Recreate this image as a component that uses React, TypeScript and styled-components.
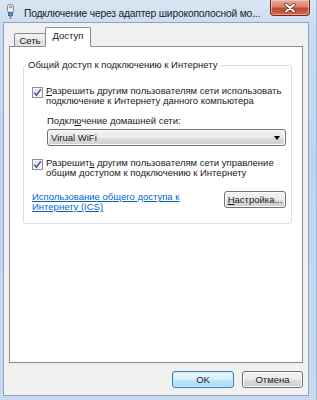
import React from "react";
import styled, { createGlobalStyle } from "styled-components";

const Global = createGlobalStyle`
  html, body { margin: 0; padding: 0; background: #c4d8ee; }
  body { font-family: "Liberation Sans", Arial, sans-serif; }
  * { box-sizing: border-box; }
`;

const Win = styled.div`
  width: 317px;
  height: 400px;
  display: flex;
  flex-direction: column;
  padding: 0 7px 4px 3px;
  background: linear-gradient(180deg, #d9e6f4 0%, #c8dbef 8%, #bfd4ec 40%, #c6d9ee 100%);
  border-right: 1px solid #9fb8d3;
`;

const TitleBar = styled.div`
  height: 22px;
  display: flex;
  align-items: flex-start;
  flex: none;
`;

const AppIcon = styled.svg`
  margin: 4px 0 0 3px;
  flex: none;
`;

const Title = styled.div`
  flex: 1;
  margin: 7px 0 0 9px;
  font-size: 10.3px;
  letter-spacing: -0.2px;
  line-height: 13px;
  color: #1e1e1e;
  white-space: nowrap;
`;

const CloseBtn = styled.div`
  width: 40px;
  height: 16px;
  margin-right: -1px;
  flex: none;
  display: flex;
  align-items: center;
  justify-content: center;
  border: 1px solid #6d2a20;
  border-top: none;
  border-radius: 0 0 4px 4px;
  background: linear-gradient(180deg, #e9a898 0%, #d88471 45%, #c14a33 55%, #cf6a4e 100%);
  box-shadow: inset 0 0 0 1px rgba(255, 220, 210, 0.5);
`;

const Client = styled.div`
  flex: 1;
  display: flex;
  flex-direction: column;
  background: #f0f0f0;
  border: 1px solid #8ea4bd;
  padding: 4px 5px 7px 5px;
  font-size: 9.5px;
  line-height: 10px;
  color: #1a1a1a;
`;

const Tabs = styled.div`
  display: flex;
  align-items: flex-end;
  padding-left: 5px;
  height: 20px;
  margin-bottom: -1px;
  position: relative;
  z-index: 1;
`;

const Tab = styled.div<{ $active?: boolean }>`
  display: flex;
  align-items: center;
  justify-content: center;
  border: 1px solid #898c95;
  border-radius: 2px 2px 0 0;
  font-size: 9.5px;
  color: #1a1a1a;
  ${(p) =>
    p.$active
      ? `
    width: 46px;
    height: 20px;
    background: #ffffff;
    border-bottom-color: #ffffff;
    margin-left: -1px;
    padding-bottom: 2px;
  `
      : `
    width: 32px;
    height: 14px;
    background: linear-gradient(180deg, #f3f3f3 0%, #ebebeb 50%, #dedede 51%, #e5e5e5 100%);
    padding-top: 1px;
  `}
`;

const Panel = styled.div`
  flex: 1;
  background: #ffffff;
  border: 1px solid #898c95;
  padding: 12px 10px 0 13px;
`;

const Group = styled.fieldset`
  margin: 0;
  border: 1px solid #d5dfe5;
  border-radius: 3px;
  padding: 16px 4px 11px 8px;
  min-width: 0;
`;

const Legend = styled.legend`
  padding: 0 2px;
  margin-left: -6px;
  font-size: 9.5px;
  line-height: 12px;
  color: #1a1a1a;
`;

const CheckRow = styled.div<{ $top: number }>`
  display: flex;
  align-items: flex-start;
  margin-top: ${(p) => p.$top}px;
`;

const Box = styled.div`
  width: 11px;
  height: 11px;
  flex: none;
  margin: 0 3px 0 0;
  border: 1px solid #8e8f8f;
  background: linear-gradient(135deg, #d8dde3 0%, #f2f4f6 60%, #ffffff 100%);
  box-shadow: inset 0 0 0 1px #f4f4f4;
  display: flex;
  align-items: center;
  justify-content: center;
`;

const CheckText = styled.div`
  line-height: 10px;
  margin-top: -1px;
  white-space: nowrap;
`;

const U = styled.span`
  text-decoration: underline;
`;

const FieldLabel = styled.div`
  margin: 10px 0 0 15px;
  line-height: 10px;
`;

const Combo = styled.div`
  margin: 3px 1px 0 15px;
  height: 17px;
  display: flex;
  align-items: center;
  justify-content: space-between;
  padding: 0 5px 0 3px;
  border: 1px solid #707070;
  border-radius: 3px;
  background: linear-gradient(180deg, #f2f2f2 0%, #ebebeb 50%, #dddddd 51%, #cfcfcf 100%);
  box-shadow: inset 0 0 0 1px #fcfcfc;
`;

const Arrow = styled.div`
  width: 0;
  height: 0;
  border-left: 3.5px solid transparent;
  border-right: 3.5px solid transparent;
  border-top: 4px solid #000;
`;

const LinkRow = styled.div`
  margin-top: 13px;
  display: flex;
  justify-content: space-between;
  align-items: flex-start;
  padding-right: 1px;
`;

const Link = styled.a`
  color: #0066cc;
  text-decoration: underline;
  line-height: 10px;
  margin-top: 1px;
`;

const Button = styled.div<{ $default?: boolean; $w: number }>`
  width: ${(p) => p.$w}px;
  height: 17px;
  display: flex;
  align-items: center;
  justify-content: center;
  font-size: 9.5px;
  color: #1a1a1a;
  border: 1px solid ${(p) => (p.$default ? "#3c7fb1" : "#707070")};
  border-radius: 3px;
  background: ${(p) =>
    p.$default
      ? "linear-gradient(180deg, #eaf6fd 0%, #d9f0fc 50%, #bee6fd 51%, #a7d9f5 100%)"
      : "linear-gradient(180deg, #f2f2f2 0%, #ebebeb 50%, #dddddd 51%, #cfcfcf 100%)"};
  box-shadow: inset 0 0 0 1px ${(p) => (p.$default ? "#c6e6f7" : "#fcfcfc")};
  flex: none;
`;

const Footer = styled.div`
  display: flex;
  justify-content: flex-end;
  gap: 8px;
  margin-top: 8px;
`;

const Check = () => (
  <svg width="9" height="9" viewBox="0 0 9 9">
    <path d="M1.3 4.6 L3.4 7.2 L7.8 1.2" fill="none" stroke="#4a5f97" strokeWidth="1.6" />
  </svg>
);

export default function App() {
  return (
    <>
      <Global />
      <Win>
        <TitleBar>
          <AppIcon width="9" height="15" viewBox="0 0 9 15">
            <rect x="1.5" y="0.5" width="6" height="8" rx="2" fill="#e8ecef" stroke="#7d8790" />
            <rect x="3" y="2" width="3" height="2" fill="#9aa5ae" />
            <rect x="2.5" y="8.5" width="4" height="3" fill="#5f8fc4" stroke="#3d6a9e" />
            <rect x="3.5" y="11.5" width="2" height="3" fill="#7d8790" />
          </AppIcon>
          <Title>Подключение через адаптер широкополосной мо...</Title>
          <CloseBtn>
            <svg width="12" height="10" viewBox="0 0 12 10">
              <path d="M2 1.5 L10 8.5 M10 1.5 L2 8.5" stroke="#5a2017" strokeWidth="3.4" strokeLinecap="round" />
              <path d="M2 1.5 L10 8.5 M10 1.5 L2 8.5" stroke="#ffffff" strokeWidth="2" strokeLinecap="round" />
            </svg>
          </CloseBtn>
        </TitleBar>
        <Client>
          <Tabs>
            <Tab>Сеть</Tab>
            <Tab $active>Доступ</Tab>
          </Tabs>
          <Panel>
            <Group>
              <Legend>Общий доступ к подключению к Интернету</Legend>
              <CheckRow $top={0}>
                <Box>
                  <Check />
                </Box>
                <CheckText>
                  <U>Р</U>азрешить другим пользователям сети использовать
                  <br />
                  подключение к Интернету данного компьютера
                </CheckText>
              </CheckRow>
              <FieldLabel>
                Подкл<U>ю</U>чение домашней сети:
              </FieldLabel>
              <Combo>
                <span>Virual WiFi</span>
                <Arrow />
              </Combo>
              <CheckRow $top={13}>
                <Box>
                  <Check />
                </Box>
                <CheckText>
                  Разрешит<U>ь</U> другим пользователям сети управление
                  <br />
                  общим доступом к подключению к Интернету
                </CheckText>
              </CheckRow>
              <LinkRow>
                <Link href="#">
                  Использование общего доступа к
                  <br />
                  Интернету (ICS)
                </Link>
                <Button $w={62}>
                  <U>Н</U>астройка...
                </Button>
              </LinkRow>
            </Group>
          </Panel>
          <Footer>
            <Button $default $w={62}>OK</Button>
            <Button $w={61}>Отмена</Button>
          </Footer>
        </Client>
      </Win>
    </>
  );
}
